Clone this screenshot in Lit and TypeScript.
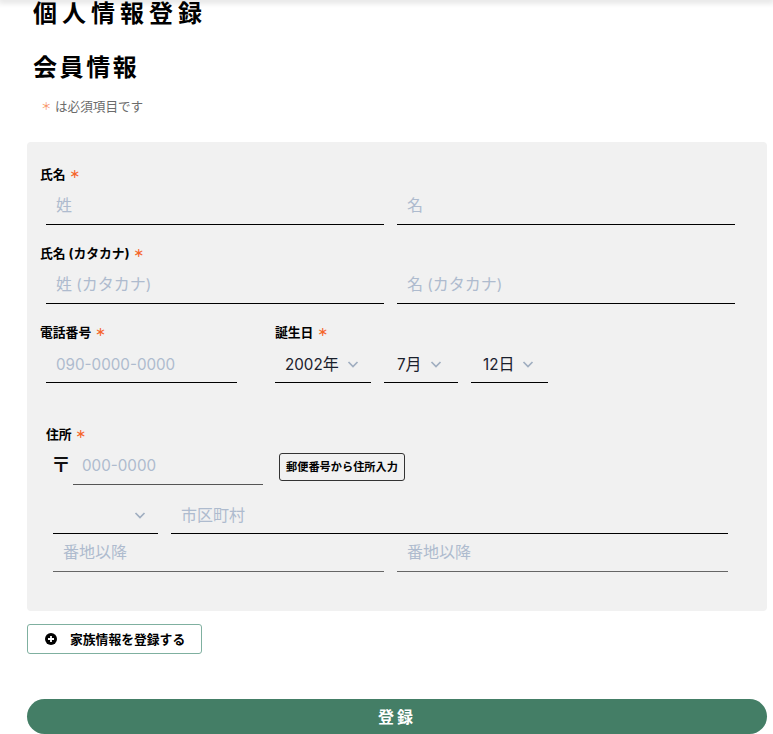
import { LitElement, html, css, svg } from "lit";
import { customElement } from "lit/decorators.js";

const chevron = svg`<svg class="chev" viewBox="0 0 12 12" width="12" height="12"><path d="M1.500 4l4.500 4.500L10.500 4" fill="none" stroke="#a0aec0" stroke-width="1.7"/></svg>`;

@customElement("app-root")
export class AppRoot extends LitElement {
  static styles = css`
    :host { display: block; width: 773px; height: 734px; overflow: hidden; background: #fff; color: #000;
      font-family: Inter, "Noto Sans CJK JP", sans-serif; }
    .topshadow { height: 0; box-shadow: 0 0 6px 2px rgba(0,0,0,.18); }
    h1, h2 { margin: 0; font-weight: 700; font-size: 24px; line-height: 26px; padding-left: 33px; white-space: nowrap; }
    h1 { letter-spacing: 5px; padding-top: 1px; }
    h2 { letter-spacing: 2.6px; margin-top: 15px; padding-top: 13px; height: 26px; box-sizing: content-box; }
    .note { margin: 0; padding: 17px 0 0 41px; font-size: 12.6px; line-height: 18px; color: #6b6b6b; display: flex; gap: 5px; height: 19px; }
    .note .req { color: #f8925f; font-weight: 400; }
    .panel { margin: 25px 6px 0 27px; height: 469px; box-sizing: border-box; background: #f1f1f1; border-radius: 4px; padding: 24px 32px 0 13px; }
    .label { font-size: 12.8px; font-weight: 700; line-height: 18px; height: 18px; display: flex; gap: 4px; white-space: nowrap; }
    .req { color: #f5652a; font-weight: 900; font-size: 10.5px; display: inline-block; width: 9px; }
    .row { display: flex; gap: 13px; padding-left: 6px; }
    .input { height: 41px; box-sizing: border-box; border-bottom: 1px solid #000; font-size: 16px; line-height: 24px; padding: 9px 10px 0; color: #aebbce; white-space: nowrap; }
    .n { font-size: 15.2px; }
    .grow { flex: 1 1 0; }
    .g2 { margin-top: 20px; }
    .g3 { margin-top: 20px; display: flex; }
    .phone { width: 191px; margin-left: 6px; padding-top: 11px; }
    .bcol { margin-left: 38px; }
    .sel { color: #1a202c; display: flex; align-items: flex-start; gap: 8px; padding-top: 10px; }
    .chev { margin-top: 6px; flex: none; }
    .addr { margin-top: 43px; padding-left: 6px; }
    .zip { display: flex; margin-top: 2px; }
    .mark { width: 27px; box-sizing: border-box; padding: 7px 0 0 5px; font-size: 20px; line-height: 24px; color: #111; font-weight: 700; }
    .zipin { width: 190px; height: 39px; padding-top: 8px; padding-left: 9px; border-bottom-color: #555; }
    .zipbtn { margin: 7px 0 0 16px; height: 28px; width: 126px; box-sizing: border-box; border: 1px solid #333; border-radius: 3px; background: #f1f1f1; font: 700 11.2px/26px Inter, "Noto Sans CJK JP", sans-serif; color: #000; padding: 0; text-align: center; white-space: nowrap; }
    .r3 { display: flex; gap: 13px; margin-top: 10px; padding-left: 13px; width: 675px; }
    .r3 .input { height: 39px; padding-top: 8px; }
    .pref { width: 105px; flex: none; justify-content: flex-end; padding: 8px 12px 0 0; }
    .r4 { display: flex; gap: 13px; padding-left: 13px; width: 675px; }
    .r4 .input { height: 38px; border-bottom: 1px solid #666; padding-top: 6px; }
    .family { margin: 13px 0 0 27px; width: 175px; height: 30px; box-sizing: border-box; display: flex; align-items: center; gap: 13px; padding: 1px 0 0 17px; border: 1px solid #7fb0a0; border-radius: 3px; background: #fff; font: 700 12.8px/18px Inter, "Noto Sans CJK JP", sans-serif; color: #000; white-space: nowrap; }
    .family svg { margin-top: -1px; }
    .submit { display: block; margin: 45px 6px 0 27px; width: 740px; height: 35px; border: 0; border-radius: 18px; background: #447e66; color: #fff; font: 700 16px/35px Inter, "Noto Sans CJK JP", sans-serif; letter-spacing: 3px; padding: 1px 0 0; }
  `;

  render() {
    return html`
      <div class="topshadow"></div>
      <h1>個人情報登録</h1>
      <h2>会員情報</h2>
      <p class="note"><span class="req">＊</span><span>は必須項目です</span></p>
      <div class="panel">
        <div class="label">氏名 <span class="req">＊</span></div>
        <div class="row">
          <div class="input grow">姓</div>
          <div class="input grow">名</div>
        </div>
        <div class="label g2">氏名 (カタカナ) <span class="req">＊</span></div>
        <div class="row">
          <div class="input grow">姓<span class="n"> (</span>カタカナ<span class="n">)</span></div>
          <div class="input grow">名<span class="n"> (</span>カタカナ<span class="n">)</span></div>
        </div>
        <div class="g3">
          <div>
            <div class="label">電話番号 <span class="req">＊</span></div>
            <div class="input phone n">090-0000-0000</div>
          </div>
          <div class="bcol">
            <div class="label">誕生日 <span class="req">＊</span></div>
            <div class="row" style="padding-left:0">
              <div class="input sel" style="width:96px"><span><span class="n">2002</span>年</span> ${chevron}</div>
              <div class="input sel" style="width:74px;padding-left:13px"><span><span class="n">7</span>月</span> ${chevron}</div>
              <div class="input sel" style="width:77px;padding-left:12px"><span><span class="n">12</span>日</span> ${chevron}</div>
            </div>
          </div>
        </div>
        <div class="addr">
          <div class="label">住所 <span class="req">＊</span></div>
          <div class="zip">
            <div class="mark">〒</div>
            <div class="input zipin n">000-0000</div>
            <button class="zipbtn">郵便番号から住所入力</button>
          </div>
        </div>
        <div class="r3">
          <div class="input sel pref">${chevron}</div>
          <div class="input grow">市区町村</div>
        </div>
        <div class="r4">
          <div class="input grow">番地以降</div>
          <div class="input grow">番地以降</div>
        </div>
      </div>
      <button class="family">
        <svg width="12" height="12" viewBox="0 0 12 12"><circle cx="6" cy="6" r="6" fill="#000"/><path d="M6 3v6M3 6h6" stroke="#fff" stroke-width="1.8"/></svg>
        家族情報を登録する
      </button>
      <button class="submit">登録</button>
    `;
  }
}
